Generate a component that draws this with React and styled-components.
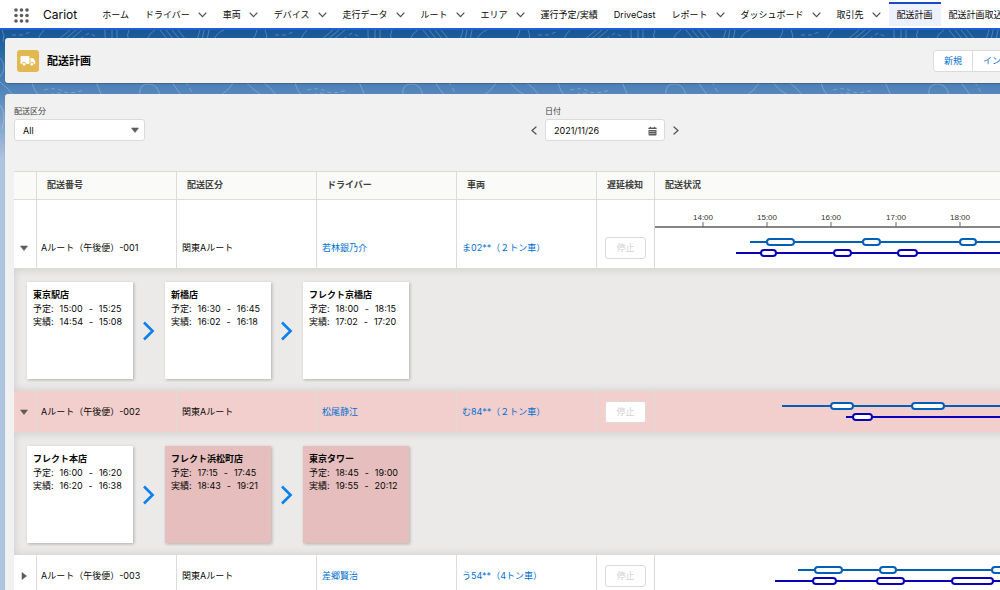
import React from 'react';
import styled, { createGlobalStyle } from 'styled-components';

const GlobalStyle = createGlobalStyle`
  * {
    box-sizing: border-box;
  }

  body {
    margin: 0;
    background: #b0c4df;
    color: #080707;
    font-family: Inter, 'Noto Sans CJK JP', sans-serif;
    font-size: 9px;
    line-height: 13px;
    overflow-x: hidden;
  }

  button, input, select {
    font: inherit;
    color: inherit;
  }

  a {
    color: #0070d2;
    text-decoration: none;
  }
`;

const Page = styled.div`
  position: relative;
  min-height: 100vh;
  overflow: hidden;
`;

const Backdrop = styled.div`
  position: absolute;
  inset: 30px 0 0;
  z-index: -1;
  background: linear-gradient(#195594 0, #1b5f9e 9px, #4f83b9 58px, #b0c4df 130px);

  svg {
    display: block;
    width: 100%;
    height: 100px;
  }
`;

const NavBar = styled.nav`
  display: flex;
  align-items: stretch;
  height: 30px;
  padding-left: 14px;
  background: #fff;
  border-bottom: 2px solid #1b5fd9;
  white-space: nowrap;
`;

const Launcher = styled.button`
  display: flex;
  align-items: center;
  padding: 2px 0 0;
  border: 0;
  background: none;
`;

const AppName = styled.span`
  display: flex;
  align-items: center;
  margin: 0 17px 0 14px;
  font-size: 12px;
`;

const NavItem = styled.a`
  display: flex;
  align-items: center;
  gap: 8px;
  flex: none;
  margin: 2px 0;
  padding: 0 8px;
  color: #080707;
  background: ${props => props.$active ? '#edf1fc' : 'transparent'};
  box-shadow: ${props => props.$active ? 'inset 0 2px #1b48c8' : 'none'};

  svg {
    margin-top: 2px;
  }
`;

const Main = styled.main`
  display: flex;
  flex-direction: column;
  gap: 11px;
  min-width: 1050px;
  padding: 8px 0 0 5px;
`;

const Card = styled.section`
  background: #f1f1f1;
  border-radius: 3px;
  box-shadow: 0 1px 1px rgba(60, 60, 60, 0.4);
`;

const PageHeader = styled(Card)`
  display: flex;
  align-items: center;
  height: 45px;
  padding: 0 11px 0 12px;
`;

const HeaderIcon = styled.span`
  display: flex;
  align-items: center;
  justify-content: center;
  width: 22px;
  height: 22px;
  border-radius: 3px;
  background: #e1b950;
`;

const Title = styled.h1`
  flex: 1;
  margin: 0 0 0 8px;
  font-size: 11px;
  font-weight: 700;
  line-height: 16px;
`;

const ButtonGroup = styled.div`
  display: flex;
`;

const HeaderButton = styled.button`
  height: 22px;
  padding: 0 10px;
  color: #0070d2;
  background: #fff;
  border: 1px solid #dddbda;

  &:first-child {
    border-radius: 3px 0 0 3px;
  }

  & + & {
    margin-left: -1px;
    border-radius: 0 3px 3px 0;
  }
`;

const Panel = styled(Card)`
  min-height: calc(100vh - 94px);
  padding: 11px 0 0 9px;
`;

const Filters = styled.div`
  display: flex;
  gap: 386px;
  height: 66px;
`;

const Field = styled.div`
  display: flex;
  flex-direction: column;
  gap: 1px;
  color: #3e3e3c;
  font-size: 8px;
`;

const FieldLabel = styled.label`
  margin-left: ${props => props.$indent || 0}px;
`;

const ControlBox = styled.div`
  display: flex;
  align-items: center;
  width: ${props => props.$width}px;
  height: 22px;
  padding-right: ${props => props.$right || 5}px;
  color: #080707;
  background: #fff;
  border: 1px solid #dddbda;
  border-radius: 3px;
  font-size: 9px;
`;

const Select = styled.select`
  flex: 1;
  height: 20px;
  padding: 0 8px;
  border: 0;
  background: none;
  appearance: none;
`;

const DateInput = styled.input`
  flex: 1;
  min-width: 0;
  height: 20px;
  padding: 0 8px;
  border: 0;
  background: none;
`;

const DateRow = styled.div`
  display: flex;
  align-items: center;
  gap: 8px;
`;

const IconButton = styled.button`
  display: flex;
  align-items: center;
  justify-content: center;
  padding: 0;
  border: 0;
  background: none;
`;

const Table = styled.table`
  width: 100%;
  border-collapse: separate;
  border-spacing: 0;
  table-layout: fixed;
  background: #fff;
`;

const HeadCell = styled.th`
  height: 29px;
  padding: 0 0 2px 10px;
  text-align: left;
  font-weight: 700;
  color: #3e3e3c;
  background: #fafaf9;
  border: solid #dddbda;
  border-width: 1px 0 1px ${props => props.$first ? 0 : 1}px;
`;

const Row = styled.tr`
  background: ${props => props.$late ? '#f2cecd' : '#fff'};
`;

const Cell = styled.td`
  height: ${props => props.$tall ? 69 : 42}px;
  padding: ${props => props.$tall ? 27 : 0}px 0 0 ${props => props.$pad ?? 5}px;
  vertical-align: middle;
  border: solid #dddbda;
  border-width: 0 0 1px ${props => props.$first ? 0 : 1}px;
`;

const ChartCell = styled(Cell)`
  padding: 0;
  vertical-align: bottom;

  svg {
    display: block;
    width: 100%;
  }
`;

const StopButton = styled.button`
  display: block;
  width: 41px;
  height: 22px;
  padding: 0;
  background: #fff;
  border: 1px solid #dddbda;
  border-radius: 3px;

  &:disabled {
    color: #d4d2d1;
  }
`;

const DetailCell = styled.td`
  height: 122px;
  padding: 13px 13px 12px;
  background: #ebeae9;
  box-shadow: inset 0 0 9px rgba(0, 0, 0, 0.14);
`;

const Stops = styled.div`
  display: flex;
  align-items: center;
`;

const Arrow = styled.span`
  display: flex;
  justify-content: center;
  width: 32px;
`;

const StopCard = styled.article`
  width: 106px;
  height: 97px;
  padding: 6px;
  background: ${props => props.$late ? '#e5bebd' : '#fff'};
  box-shadow: 1px 1px 3px rgba(0, 0, 0, 0.25);
  white-space: nowrap;
`;

const StopName = styled.h2`
  margin: 0;
  font-size: 9px;
  font-weight: 700;
  line-height: 14px;
`;

const StopTime = styled.div`
  display: flex;
  gap: 6px;
`;

const navItems = [
  { label: 'ホーム' },
  { label: 'ドライバー', menu: true },
  { label: '車両', menu: true },
  { label: 'デバイス', menu: true },
  { label: '走行データ', menu: true },
  { label: 'ルート', menu: true },
  { label: 'エリア', menu: true },
  { label: '運行予定/実績' },
  { label: 'DriveCast' },
  { label: 'レポート', menu: true },
  { label: 'ダッシュボード', menu: true },
  { label: '取引先', menu: true },
  { label: '配送計画', active: true },
  { label: '配送計画取込' },
];

const columns = ['', '配送番号', '配送区分', 'ドライバー', '車両', '遅延検知', '配送状況'];
const columnWidths = [22, 140, 140, 140, 140, 58];

const deliveries = [
  {
    id: 'Aルート（午後便）-001',
    type: '関東Aルート',
    driver: '若林銀乃介',
    car: 'ま02**（２トン車）',
    open: true,
    departure: ['14:44', '14:31'],
    stops: [
      { name: '東京駅店', plan: ['15:00', '15:25'], actual: ['14:54', '15:08'] },
      { name: '新橋店', plan: ['16:30', '16:45'], actual: ['16:02', '16:18'] },
      { name: 'フレクト京橋店', plan: ['18:00', '18:15'], actual: ['17:02', '17:20'] },
    ],
  },
  {
    id: 'Aルート（午後便）-002',
    type: '関東Aルート',
    driver: '松尾静江',
    car: 'む84**（２トン車）',
    open: true,
    late: true,
    departure: ['15:14', '16:14'],
    stops: [
      { name: 'フレクト本店', plan: ['16:00', '16:20'], actual: ['16:20', '16:38'] },
      { name: 'フレクト浜松町店', plan: ['17:15', '17:45'], actual: ['18:43', '19:21'], late: true },
      { name: '東京タワー', plan: ['18:45', '19:00'], actual: ['19:55', '20:12'], late: true },
    ],
  },
  {
    id: 'Aルート（午後便）-003',
    type: '関東Aルート',
    driver: '差郷賢治',
    car: 'う54**（4トン車）',
    departure: ['15:29', '15:07'],
    stops: [
      { plan: ['15:45', '16:10'], actual: ['15:43', '16:04'] },
      { plan: ['16:45', '17:00'], actual: ['16:43', '17:08'] },
      { plan: ['18:30', '18:50'], actual: ['17:53', '18:31'] },
    ],
  },
];

// The chart starts at 13:15 and one hour is about 64px wide
const timeToX = (time) => {
  const [hours, minutes] = time.split(':').map(Number);
  return Math.round(((hours - 13) * 60 + minutes - 15) * 64.15 / 60);
};

const ChevronDown = () => (
  <svg width="9" height="6" viewBox="0 0 9 6" fill="none" stroke="#514f4d" strokeWidth="1.1" strokeLinecap="round">
    <path d="M1 1l3.5 3.6L8 1" />
  </svg>
);

const ChevronSide = ({ left }) => (
  <svg width="6" height="9" viewBox="0 0 6 9" fill="none" stroke="#514f4d" strokeWidth="1.2" strokeLinecap="round">
    <path d={left ? 'M5 1L1 4.5 5 8' : 'M1 1l4 3.5L1 8'} />
  </svg>
);

const Triangle = ({ right }) => (
  <svg width="8" height="8" viewBox="0 0 8 8" fill="#5e5c5a" stroke="#5e5c5a" strokeWidth="0.6" strokeLinejoin="round">
    <path d={right ? 'M2 0.5v7L6.5 4z' : 'M0.5 2h7L4 6.5z'} />
  </svg>
);

const ArrowRight = () => (
  <svg width="12" height="20" viewBox="0 0 12 20" fill="none" stroke="#0b80f0" strokeWidth="2.6">
    <path d="M1 1.5L9.6 10 1 18.5" />
  </svg>
);

const DotsIcon = () => (
  <svg width="15" height="15" viewBox="0 0 15 15" fill="#5e5c5a">
    {[2, 7.5, 13].map(y => [2, 7.5, 13].map(x => (
      <circle key={`${x}-${y}`} cx={x} cy={y} r="1.8" />
    )))}
  </svg>
);

const TruckIcon = () => (
  <svg width="16" height="12" viewBox="0 0 16 12">
    <path fill="#fff" d="M1.3 1h7.4q.8 0 .8.8V9H1.3Q.5 9 .5 8.2V1.8Q.5 1 1.3 1z" />
    <path fill="#fff" d="M10.4 3.2h2.3q.4 0 .7.4l1.6 2q.2.3.2.6V8.400q0 .6-.6.6h-4.200z" />
    <circle cx="4" cy="9.2" r="1.9" fill="#fff" stroke="#e1b950" strokeWidth="0.9" />
    <circle cx="11.8" cy="9.2" r="1.9" fill="#fff" stroke="#e1b950" strokeWidth="0.9" />
  </svg>
);

const CalendarIcon = () => (
  <svg width="9" height="12" viewBox="0 0 9 12">
    <path fill="#5e5c5a" d="M1.2 3.6h.8v-.8h1v.8h3v-.8h1v.8h.8q.9 0 .9.900v.6H.3v-.6q0-.9.9-.9z" />
    <path fill="#5e5c5a" d="M.5 5.900h8v4.800q0 .8-.8.800H1.300q-.8 0-.8-.8z" />
    <path stroke="#fff" strokeWidth="0.7" strokeDasharray="1.2 0.7" d="M1.500 7.500h6M1.500 9.500h6" />
  </svg>
);

const Contours = () => (
  <svg aria-hidden="true">
    <defs>
      <pattern id="contours" width="263" height="100" patternUnits="userSpaceOnUse">
        <g fill="none" stroke="#fff" strokeOpacity="0.24">
          <path d="M2 0q3 5 1 12M44 0q-4 4-6 9M58 10L70 0M64 10L76 0M70 10L82 0M105 0v6q0 3 3 5M112 0v10M117 0v10M129 0q-3 6 0 10M147 10q2-7 8-10M160 0l8 10M166 0l8 10M172 0l8 10M178 0l8 10M197 10l3-10M202 10l2-10M207 10l2-10M214 10q2-7 10-10M252 10q4-4 5-10" />
          <path strokeDasharray="4 3" d="M12 5h10l8-3M80 9l9-6 6 3" />
          <path d="M0 52q8 6 14 14M32 52q2 10 8 14M140 66q-2-13 10-12 8 1 10 12M172 52q5 8 10 14M220 66q8-5 14-14M246 52q8 9 17 14M96 52l6 14" />
          <path strokeDasharray="4 3" d="M44 60q12-3 18 1t22-1M50 65q8-4 14 0h24M186 52l8 14" />
          <path d="M0 28q8 9 0 19M0 75q7 9 2 24" />
        </g>
      </pattern>
    </defs>
    <rect width="100%" height="100%" fill="url(#contours)" />
  </svg>
);

const Track = ({ times, start, y, color }) => (
  <g stroke={color} strokeWidth="2">
    <line x1={timeToX(start)} x2="100%" y1={y} y2={y} />
    {times.map(([from, to]) => (
      <rect
        key={from}
        x={timeToX(from)}
        y={y - 3}
        width={timeToX(to) - timeToX(from)}
        height="6"
        rx="3"
        fill="#fff"
      />
    ))}
  </g>
);

const Axis = () => (
  <g>
    <line x1="0" x2="100%" y1="27" y2="27" stroke="#858585" strokeWidth="2" />
    {['14:00', '15:00', '16:00', '17:00', '18:00'].map(time => (
      <g key={time}>
        <line x1={timeToX(time)} x2={timeToX(time)} y1="22" y2="27" stroke="#666" />
        <text
          x={timeToX(time)}
          y="20"
          textAnchor="middle"
          fontFamily="Liberation Sans, sans-serif"
          fontSize="8"
          fill="#333"
        >
          {time}
        </text>
      </g>
    ))}
  </g>
);

const Timeline = ({ delivery, axis }) => {
  const top = axis ? 27 : 0;

  return (
    <svg height={top + 41}>
      {axis && <Axis />}
      <Track times={delivery.stops.map(s => s.plan)} start={delivery.departure[0]} y={top + 15} color="#005fb8" />
      <Track times={delivery.stops.map(s => s.actual)} start={delivery.departure[1]} y={top + 26} color="#0a00b8" />
    </svg>
  );
};

const StopDetail = ({ stop }) => (
  <StopCard $late={stop.late}>
    <StopName>{stop.name}</StopName>
    <StopTime><span>予定:</span><span>{stop.plan[0]}</span><span>-</span><span>{stop.plan[1]}</span></StopTime>
    <StopTime><span>実績:</span><span>{stop.actual[0]}</span><span>-</span><span>{stop.actual[1]}</span></StopTime>
  </StopCard>
);

const DeliveryRows = ({ delivery, first }) => (
  <>
    <Row $late={delivery.late}>
      <Cell $first $tall={first} $pad={6}>
        <IconButton aria-label="詳細" aria-expanded={!!delivery.open}>
          <Triangle right={!delivery.open} />
        </IconButton>
      </Cell>
      <Cell $tall={first} $pad={4}>{delivery.id}</Cell>
      <Cell $tall={first}>{delivery.type}</Cell>
      <Cell $tall={first}><a href="#driver">{delivery.driver}</a></Cell>
      <Cell $tall={first}><a href="#car">{delivery.car}</a></Cell>
      <Cell $tall={first} $pad={8}><StopButton disabled>停止</StopButton></Cell>
      <ChartCell $tall={first}><Timeline delivery={delivery} axis={first} /></ChartCell>
    </Row>
    {delivery.open && (
      <tr>
        <DetailCell colSpan={columns.length}>
          <Stops>
            {delivery.stops.map((stop, index) => (
              <React.Fragment key={stop.name}>
                {index > 0 && <Arrow><ArrowRight /></Arrow>}
                <StopDetail stop={stop} />
              </React.Fragment>
            ))}
          </Stops>
        </DetailCell>
      </tr>
    )}
  </>
);

const App = () => (
  <Page>
    <GlobalStyle />
    <Backdrop><Contours /></Backdrop>
    <NavBar>
      <Launcher aria-label="アプリケーションランチャー"><DotsIcon /></Launcher>
      <AppName>Cariot</AppName>
      {navItems.map(item => (
        <NavItem key={item.label} href="#nav" $active={item.active}>
          {item.label}
          {item.menu && <ChevronDown />}
        </NavItem>
      ))}
    </NavBar>
    <Main>
      <PageHeader>
        <HeaderIcon><TruckIcon /></HeaderIcon>
        <Title>配送計画</Title>
        <ButtonGroup>
          <HeaderButton>新規</HeaderButton>
          <HeaderButton>インポート</HeaderButton>
        </ButtonGroup>
      </PageHeader>
      <Panel>
        <Filters>
          <Field>
            <FieldLabel htmlFor="type">配送区分</FieldLabel>
            <ControlBox $width={131}>
              <Select id="type"><option>All</option></Select>
              <Triangle />
            </ControlBox>
          </Field>
          <Field>
            <FieldLabel htmlFor="date" $indent={14}>日付</FieldLabel>
            <DateRow>
              <IconButton aria-label="前の日"><ChevronSide left /></IconButton>
              <ControlBox $width={120} $right={7}>
                <DateInput id="date" defaultValue="2021/11/26" />
                <CalendarIcon />
              </ControlBox>
              <IconButton aria-label="次の日"><ChevronSide /></IconButton>
            </DateRow>
          </Field>
        </Filters>
        <Table>
          <colgroup>
            {columnWidths.map((width, index) => <col key={index} width={width} />)}
            <col />
          </colgroup>
          <thead>
            <tr>
              {columns.map((label, index) => (
                <HeadCell key={index} $first={index === 0}>{label}</HeadCell>
              ))}
            </tr>
          </thead>
          <tbody>
            {deliveries.map((delivery, index) => (
              <DeliveryRows key={delivery.id} delivery={delivery} first={index === 0} />
            ))}
          </tbody>
        </Table>
      </Panel>
    </Main>
  </Page>
);

export default App;
